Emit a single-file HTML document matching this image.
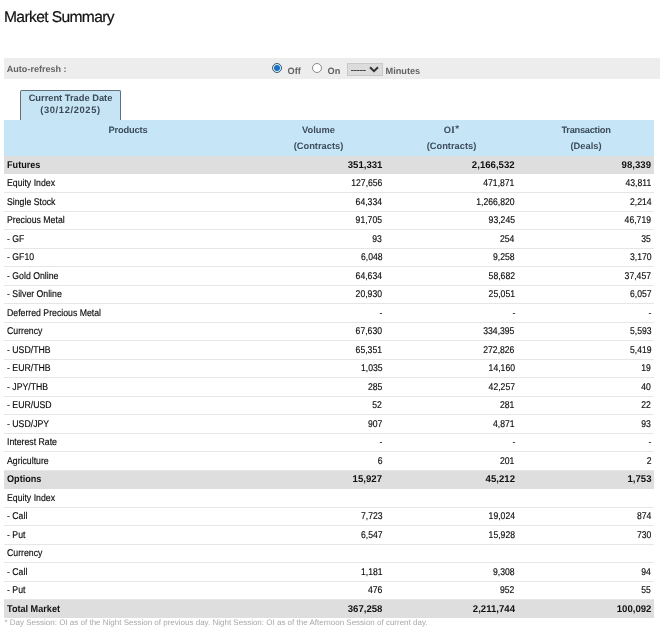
<!DOCTYPE html>
<html><head><meta charset="utf-8">
<style>
html,body{margin:0;padding:0;background:#fff;}
#wrap{position:absolute;left:0;top:0;width:660px;height:630px;will-change:transform;}
body{width:660px;height:630px;position:relative;overflow:hidden;font-family:"Liberation Sans",sans-serif;color:#222;text-rendering:geometricPrecision;}
.title{position:absolute;left:4px;top:8px;font-size:15.6px;letter-spacing:-0.62px;line-height:20px;color:#111;-webkit-text-stroke:0.2px #111;white-space:nowrap;}
.bar{position:absolute;left:4px;top:58px;width:656px;height:21px;background:#ededed;}
.bar .lbl{position:absolute;left:2.8px;top:5px;font-size:9.05px;line-height:13px;font-weight:bold;color:#626262;white-space:nowrap;}
.radio{position:absolute;top:4.5px;width:8px;height:8px;border-radius:50%;}
.radio.on{left:268px;border:1px solid #3d5a6e;background:#d4f1fb;}
.radio.on::after{content:"";position:absolute;left:1px;top:1px;width:6px;height:6px;border-radius:50%;background:#1a70c6;}
.radio.off{left:308px;border:1px solid #8a8a8a;background:#fff;}
.bar .t{position:absolute;top:7px;font-size:9.2px;line-height:13px;font-weight:bold;color:#626262;white-space:nowrap;}
.sel{position:absolute;left:343px;top:5px;width:34px;height:11px;background:#dcdcdc;border:1px solid #c9c9c9;}
.sel .d{position:absolute;left:3px;top:6px;width:15px;height:1px;background:repeating-linear-gradient(90deg,#444 0 2.5px,#777 2.5px 3px);}
.sel svg{position:absolute;left:21px;top:1.8px;}
.tab{position:absolute;left:20px;top:90px;width:99px;height:30px;background:#c7e4f5;border:1px solid #5f6f7c;border-bottom:none;border-radius:2px 2px 0 0;text-align:center;font-size:9.3px;line-height:12.2px;font-weight:bold;color:#3a4a59;}
.tab .in{padding-top:1.2px;}
.head{position:absolute;left:4px;top:120px;width:650px;height:36px;background:#c6e6f7;}
.head > span{position:absolute;top:3.3px;text-align:center;font-size:9.3px;line-height:15.5px;font-weight:bold;color:#3d4d5c;}
.r{position:absolute;left:4px;width:650px;height:18.5px;box-sizing:border-box;border-bottom:1px solid #e6e6e6;font-size:9.8px;line-height:18.5px;white-space:nowrap;color:#0a0a0a;text-rendering:geometricPrecision;-webkit-text-stroke:0.15px #0a0a0a;}
.r.g{background:#dedede;border-bottom-color:#dedede;font-weight:bold;color:#111;-webkit-text-stroke:0;}
.r span{position:absolute;top:0.5px;}
.c1{left:3px;transform:scaleX(0.89);transform-origin:0 50%;}
.r .c2,.r .c3,.r .c4{transform:scaleX(0.88);transform-origin:100% 50%;}
.r.g .c1{transform:scaleX(0.93);}
.r.g .c2,.r.g .c3,.r.g .c4{transform:scaleX(0.98);}
.c2{right:271.7px;}
.c3{right:139.2px;}
.c4{right:2.7px;}
.foot{position:absolute;left:4.5px;top:617px;font-size:8px;line-height:12px;color:#a8a8a8;white-space:nowrap;}
</style></head><body>
<div id="wrap">
<div class="title">Market Summary</div>
<div class="bar">
 <div class="lbl">Auto-refresh :</div>
 <div class="radio on"></div><div class="t" style="left:283.5px">Off</div>
 <div class="radio off"></div><div class="t" style="left:323.5px">On</div>
 <div class="sel"><div class="d"></div><svg width="10" height="7" viewBox="0 0 10 7"><path d="M1 1.2 L5 5.2 L9 1.2" fill="none" stroke="#333" stroke-width="2"/></svg></div>
 <div class="t" style="left:381.5px">Minutes</div>
</div>
<div class="tab"><div class="in">Current Trade Date<br><span style="letter-spacing:0.65px">(30/12/2025)</span></div></div>
<div class="head">
 <span style="left:0;width:248px;letter-spacing:-0.18px">Products</span>
 <span style="left:248px;width:133px">Volume<br>(Contracts)</span>
 <span style="left:381px;width:133px">O<span style="font-family:'Liberation Serif',serif;font-size:10px;line-height:0">I</span><span style="font-size:10px;line-height:0;position:relative;top:-1.2px;margin-left:0.3px">*</span><br>(Contracts)</span>
 <span style="left:514px;width:136px"><span style="letter-spacing:-0.28px">Transaction</span><br>(Deals)</span>
</div>
<div class="r g" style="top:156.00px;height:18px"><span class="c1">Futures</span><span class="c2">351,331</span><span class="c3">2,166,532</span><span class="c4">98,339</span></div>
<div class="r" style="top:174.50px"><span class="c1">Equity Index</span><span class="c2">127,656</span><span class="c3">471,871</span><span class="c4">43,811</span></div>
<div class="r" style="top:193.00px"><span class="c1">Single Stock</span><span class="c2">64,334</span><span class="c3">1,266,820</span><span class="c4">2,214</span></div>
<div class="r" style="top:211.50px"><span class="c1">Precious Metal</span><span class="c2">91,705</span><span class="c3">93,245</span><span class="c4">46,719</span></div>
<div class="r" style="top:230.00px"><span class="c1">- GF</span><span class="c2">93</span><span class="c3">254</span><span class="c4">35</span></div>
<div class="r" style="top:248.50px"><span class="c1">- GF10</span><span class="c2">6,048</span><span class="c3">9,258</span><span class="c4">3,170</span></div>
<div class="r" style="top:267.00px"><span class="c1">- Gold Online</span><span class="c2">64,634</span><span class="c3">58,682</span><span class="c4">37,457</span></div>
<div class="r" style="top:285.50px"><span class="c1">- Silver Online</span><span class="c2">20,930</span><span class="c3">25,051</span><span class="c4">6,057</span></div>
<div class="r" style="top:304.00px"><span class="c1">Deferred Precious Metal</span><span class="c2">-</span><span class="c3">-</span><span class="c4">-</span></div>
<div class="r" style="top:322.50px"><span class="c1">Currency</span><span class="c2">67,630</span><span class="c3">334,395</span><span class="c4">5,593</span></div>
<div class="r" style="top:341.00px"><span class="c1">- USD/THB</span><span class="c2">65,351</span><span class="c3">272,826</span><span class="c4">5,419</span></div>
<div class="r" style="top:359.50px"><span class="c1">- EUR/THB</span><span class="c2">1,035</span><span class="c3">14,160</span><span class="c4">19</span></div>
<div class="r" style="top:378.00px"><span class="c1">- JPY/THB</span><span class="c2">285</span><span class="c3">42,257</span><span class="c4">40</span></div>
<div class="r" style="top:396.50px"><span class="c1">- EUR/USD</span><span class="c2">52</span><span class="c3">281</span><span class="c4">22</span></div>
<div class="r" style="top:415.00px"><span class="c1">- USD/JPY</span><span class="c2">907</span><span class="c3">4,871</span><span class="c4">93</span></div>
<div class="r" style="top:433.50px"><span class="c1">Interest Rate</span><span class="c2">-</span><span class="c3">-</span><span class="c4">-</span></div>
<div class="r" style="top:452.00px"><span class="c1">Agriculture</span><span class="c2">6</span><span class="c3">201</span><span class="c4">2</span></div>
<div class="r g" style="top:470.50px"><span class="c1">Options</span><span class="c2">15,927</span><span class="c3">45,212</span><span class="c4">1,753</span></div>
<div class="r" style="top:489.00px"><span class="c1">Equity Index</span><span class="c2"></span><span class="c3"></span><span class="c4"></span></div>
<div class="r" style="top:507.50px"><span class="c1">- Call</span><span class="c2">7,723</span><span class="c3">19,024</span><span class="c4">874</span></div>
<div class="r" style="top:526.00px"><span class="c1">- Put</span><span class="c2">6,547</span><span class="c3">15,928</span><span class="c4">730</span></div>
<div class="r" style="top:544.50px"><span class="c1">Currency</span><span class="c2"></span><span class="c3"></span><span class="c4"></span></div>
<div class="r" style="top:563.00px"><span class="c1">- Call</span><span class="c2">1,181</span><span class="c3">9,308</span><span class="c4">94</span></div>
<div class="r" style="top:581.50px"><span class="c1">- Put</span><span class="c2">476</span><span class="c3">952</span><span class="c4">55</span></div>
<div class="r g" style="top:600.00px;height:18px"><span class="c1">Total Market</span><span class="c2">367,258</span><span class="c3">2,211,744</span><span class="c4">100,092</span></div>
<div class="foot">* Day Session: OI as of the Night Session of previous day. Night Session: OI as of the Afternoon Session of current day.</div>
</div>
</body></html>
